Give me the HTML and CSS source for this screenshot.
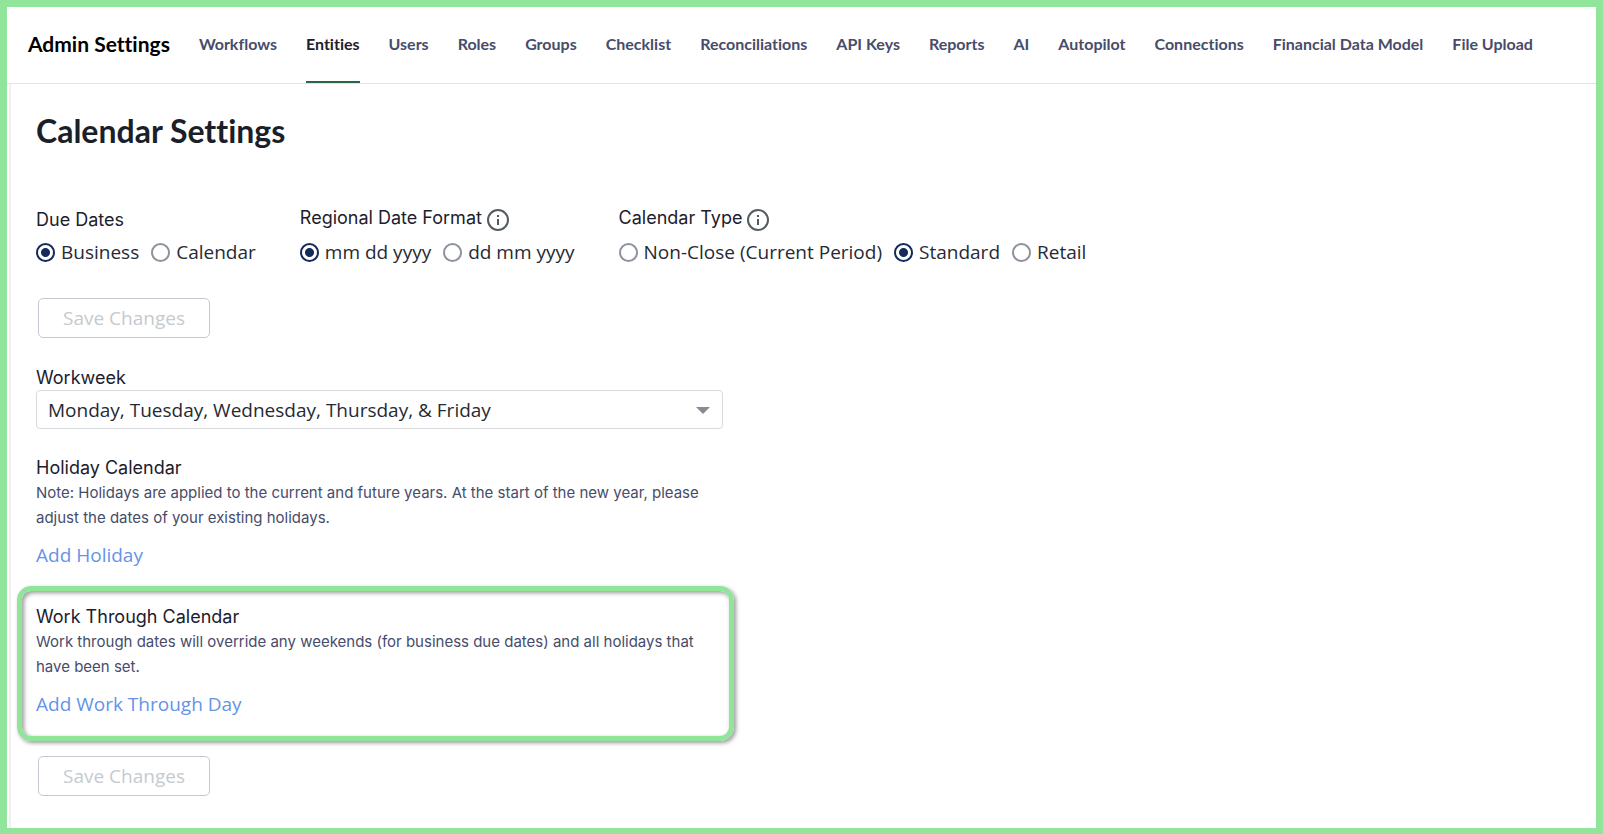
FILE: index.html
```html
<!DOCTYPE html>
<html lang="en">
<head>
<meta charset="utf-8">
<title>Admin Settings</title>
<link rel="stylesheet" href="styles.css">
</head>
<body>
<div class="page">
  <header class="topbar">
    <div class="brand">Admin Settings</div>
    <nav class="tabs">
      <a class="tab" href="#">Workflows</a>
      <a class="tab active" href="#" aria-current="page">Entities</a>
      <a class="tab" href="#">Users</a>
      <a class="tab" href="#">Roles</a>
      <a class="tab" href="#">Groups</a>
      <a class="tab" href="#">Checklist</a>
      <a class="tab" href="#">Reconciliations</a>
      <a class="tab" href="#">API Keys</a>
      <a class="tab" href="#">Reports</a>
      <a class="tab" href="#">AI</a>
      <a class="tab" href="#">Autopilot</a>
      <a class="tab" href="#">Connections</a>
      <a class="tab" href="#">Financial Data Model</a>
      <a class="tab" href="#">File Upload</a>
    </nav>
  </header>
  <main class="content">
    <h1 class="title">Calendar Settings</h1>
    <div class="options">
      <fieldset class="group">
        <legend class="legend">Due Dates</legend>
        <div class="radios">
          <label class="choice"><input class="radio" type="radio" name="due" checked>Business</label>
          <label class="choice"><input class="radio" type="radio" name="due">Calendar</label>
        </div>
      </fieldset>
      <fieldset class="group">
        <legend class="legend with-info"><span>Regional Date Format</span>
          <svg class="info" viewBox="0 0 22 22" aria-hidden="true"><circle cx="11" cy="11" r="10" fill="none" stroke="#535c60" stroke-width="2"/><path d="M10 6h2v2h-2zM10 10h2v6h-2z" fill="#535c60"/></svg>
        </legend>
        <div class="radios">
          <label class="choice"><input class="radio" type="radio" name="format" checked>mm dd yyyy</label>
          <label class="choice"><input class="radio" type="radio" name="format">dd mm yyyy</label>
        </div>
      </fieldset>
      <fieldset class="group">
        <legend class="legend with-info"><span>Calendar Type</span>
          <svg class="info" viewBox="0 0 22 22" aria-hidden="true"><circle cx="11" cy="11" r="10" fill="none" stroke="#535c60" stroke-width="2"/><path d="M10 6h2v2h-2zM10 10h2v6h-2z" fill="#535c60"/></svg>
        </legend>
        <div class="radios">
          <label class="choice"><input class="radio" type="radio" name="type">Non-Close (Current Period)</label>
          <label class="choice"><input class="radio" type="radio" name="type" checked>Standard</label>
          <label class="choice"><input class="radio" type="radio" name="type">Retail</label>
        </div>
      </fieldset>
    </div>
    <button class="save" type="button" disabled>Save Changes</button>
    <div class="column">
      <div class="field">
        <label class="label" for="workweek">Workweek</label>
        <div class="select-wrap">
          <select class="select" id="workweek"><option>Monday, Tuesday, Wednesday, Thursday, &amp; Friday</option></select>
        </div>
      </div>
      <section class="block">
        <h2 class="label">Holiday Calendar</h2>
        <p class="note">Note: Holidays are applied to the current and future years. At the start of the new year, please adjust the dates of your existing holidays.</p>
        <a class="add" href="#">Add Holiday</a>
      </section>
      <section class="block highlight">
        <h2 class="label">Work Through Calendar</h2>
        <p class="note">Work through dates will override any weekends (for business due dates) and all holidays that have been set.</p>
        <a class="add" href="#">Add Work Through Day</a>
      </section>
    </div>
    <button class="save" type="button" disabled>Save Changes</button>
  </main>
</div>
</body>
</html>
```
FILE: styles.css
```css
* { box-sizing: border-box; }
body {
  margin: 0;
  background: #fff;
  color: #262a33;
  font-family: "Open Sans", "Noto Sans", sans-serif;
  font-size: 19px;
}
.page {
  min-height: 100vh;
  border: 7px solid #90e59b;
  display: flex;
  flex-direction: column;
}
.topbar {
  display: flex;
  align-items: stretch;
  gap: 29px;
  height: 77px;
  padding-left: 21px;
  border-bottom: 1px solid #e2e3e7;
  font-family: Lato, sans-serif;
  font-weight: 700;
  font-variant-ligatures: none;
  white-space: nowrap;
}
.brand {
  line-height: 74px;
  font-size: 21px;
  color: #000;
}
.tabs { display: flex; gap: 29px; }
.tab {
  line-height: 74px;
  font-size: 16px;
  color: #474c6b;
  text-decoration: none;
}
.tab.active {
  color: #1c202d;
  box-shadow: inset 0 -2px #276749;
}
.content {
  flex: 1;
  margin-left: 2px;
  padding: 27px 25px 32px;
  border-left: 2px solid #efeff2;
}
.title {
  margin: 0 0 45px;
  font: 700 32px/40px Lato, sans-serif;
  font-variant-ligatures: none;
  color: #1b1f29;
}
.options { display: flex; flex-wrap: wrap; gap: 44px; }
.group { margin: 0; padding: 0; border: 0; min-width: 0; }
.legend {
  height: 32px;
  padding: 12px 0 0;
  font: 400 18px/24px Inter, sans-serif;
  color: #1c202d;
}
.with-info {
  display: flex;
  align-items: flex-start;
  gap: 5px;
  padding-top: 10px;
}
.info { width: 22px; height: 22px; margin-top: 3px; }
.radios { display: flex; flex-wrap: wrap; gap: 12px; margin-top: 10px; }
.choice {
  display: flex;
  align-items: center;
  gap: 6px;
  line-height: 28px;
}
.radio {
  appearance: none;
  width: 19px;
  height: 19px;
  margin: 0;
  border: 2px solid #8d939c;
  border-radius: 50%;
  background: #fff;
}
.radio:checked {
  border-color: #14295c;
  background: radial-gradient(circle, #14295c 4px, #fff 5px);
}
.save {
  display: block;
  width: 172px;
  height: 40px;
  margin-left: 2px;
  padding: 0;
  border: 1px solid #c5c9d2;
  border-radius: 5px;
  background: #fff;
  color: #c5cad0;
  font: inherit;
}
.options + .save { margin-top: 32px; }
.column { width: 687px; max-width: 100%; margin-top: 28px; }
.label {
  display: block;
  margin: 0;
  font: 400 18px/24px Inter, sans-serif;
  color: #1c202d;
}
.select-wrap { position: relative; }
.select-wrap::after {
  content: "";
  position: absolute;
  top: 17px;
  right: 13px;
  border: 7px solid transparent;
  border-top-color: #878c94;
  border-bottom: 0;
  pointer-events: none;
}
.select {
  appearance: none;
  width: 100%;
  height: 39px;
  padding: 0 11px;
  border: 1px solid #d9dadd;
  border-radius: 4px;
  background: #fff;
  color: inherit;
  font: inherit;
}
.block { margin-top: 27px; }
.note {
  margin: 0;
  font: 400 15px/25px Inter, sans-serif;
  color: #474c6b;
}
.add {
  display: inline-block;
  margin-top: 11px;
  line-height: 28px;
  color: #6693e8;
  text-decoration: none;
}
.highlight {
  margin: 17px -11px 15px -19px;
  padding: 14px 8px 18px 14px;
  border: 5px solid #90e59b;
  border-radius: 14px;
  box-shadow: 2px 2px 4px rgba(0, 0, 0, .4), inset 2px 2px 4px rgba(0, 0, 0, .4);
}
```
